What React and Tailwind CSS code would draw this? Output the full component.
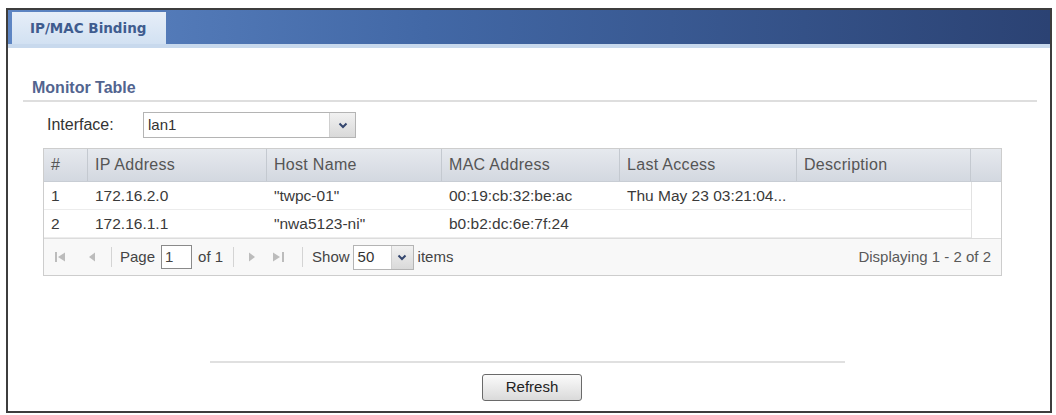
import React from 'react';

const COLS = 'grid-cols-[44px_179px_175px_178px_177px_174px_30px]';

const ROWS = [
  { n: '1', ip: '172.16.2.0', host: '"twpc-01"', mac: '00:19:cb:32:be:ac', last: 'Thu May 23 03:21:04...', desc: '' },
  { n: '2', ip: '172.16.1.1', host: '"nwa5123-ni"', mac: 'b0:b2:dc:6e:7f:24', last: '', desc: '' },
];

function Chevron() {
  return (
    <svg width="10" height="7" viewBox="0 0 10 7">
      <polyline points="1.5,1.5 5,5 8.5,1.5" fill="none" stroke="#34466e" strokeWidth="2" />
    </svg>
  );
}

function SelectBox({ value, width, height, arrowWidth }) {
  return (
    <div
      className="flex items-stretch border border-[#b4b4b4] bg-white"
      style={{ width, height }}
    >
      <span className="flex-1 flex items-center pl-[4px] text-[15px] text-[#333]">{value}</span>
      <span
        className="flex items-center justify-center border-l border-[#cfcfcf] bg-[linear-gradient(#f1f1f1,#d9d9d9)]"
        style={{ width: arrowWidth }}
      >
        <Chevron />
      </span>
    </div>
  );
}

// light grey disabled navigation glyphs, drawn edge to edge in their box
function PagerIcon({ kind }) {
  const c = '#bcbcbc';
  if (kind === 'first') {
    return (
      <svg width="10" height="12" viewBox="0 0 10 12">
        <rect x="0" y="1" width="2" height="10" fill={c} />
        <polygon points="10,1.5 3,6 10,10.5" fill={c} />
      </svg>
    );
  }
  if (kind === 'prev') {
    return (
      <svg width="8" height="12" viewBox="0 0 8 12">
        <polygon points="7,1.5 1,6 7,10.5" fill={c} />
      </svg>
    );
  }
  if (kind === 'next') {
    return (
      <svg width="8" height="12" viewBox="0 0 8 12">
        <polygon points="1,1.5 7,6 1,10.5" fill={c} />
      </svg>
    );
  }
  return (
    <svg width="12" height="12" viewBox="0 0 12 12">
      <polygon points="0,1.5 7,6 0,10.5" fill={c} />
      <rect x="9" y="1" width="2" height="10" fill={c} />
    </svg>
  );
}

function Sep() {
  return <span className="block w-px h-[20px] bg-[#d4d4d4]" />;
}

export default function App() {
  return (
    <div className="w-[1056px] h-[415px] bg-white overflow-hidden font-['Liberation_Sans',Arial,sans-serif]">
      <div className="ml-[6px] mt-[8px] w-[1046px] h-[405px] border-2 border-[#3d3d3d] bg-white">
        {/* Tab bar */}
        <div className="h-[34px] flex items-end pl-[4px] bg-[linear-gradient(to_right,#5d85c3,#4268a6_40%,#2b4273)]">
          <div className="w-[154px] h-[32px] flex items-center pl-[18px] bg-[linear-gradient(#e6eef8,#d2e1f2)] font-['DejaVu_Sans',Verdana,sans-serif] font-bold text-[13.5px] text-[#3f5c8f]">
            IP/MAC Binding
          </div>
        </div>
        <div className="h-[4px] bg-[#c8d9ed]" />

        {/* Section title */}
        <div className="pt-[31px] ml-[15px] w-[1014px]">
          <div className="pl-[9px] h-[18px] leading-[18px] text-[16px] font-bold text-[#52648f]">
            Monitor Table
          </div>
          <div className="mt-[3px] h-[2px] bg-[#dedede]" />
        </div>

        {/* Interface */}
        <div className="mt-[10px] flex items-center pl-[39px]">
          <span className="w-[96px] text-[16px] text-[#333]">Interface:</span>
          <SelectBox value="lan1" width={213} height={26} arrowWidth={26} />
        </div>

        {/* Table */}
        <div className="mt-[10px] ml-[35px] w-[959px] border border-[#cdcdcd] text-[15.5px] text-[#3a3a3a]">
          <div className={`grid ${COLS} h-[33px] bg-[linear-gradient(#e6e9ee,#d3d8e0)] border-b border-[#c8cdd4] text-[16px] tracking-[0.3px] text-[#555]`}>
            {['#', 'IP Address', 'Host Name', 'MAC Address', 'Last Access', 'Description', ''].map((h, i) => (
              <div
                key={i}
                className={`flex items-center pl-[7px] ${i < 6 ? 'border-r border-[#c4c9d0]' : ''}`}
              >
                {h}
              </div>
            ))}
          </div>
          {ROWS.map(r => (
            <div key={r.n} className={`grid ${COLS} h-[28px]`}>
              {[r.n, r.ip, r.host, r.mac, r.last, r.desc].map((v, i) => (
                <div key={i} className="flex items-center pl-[7px] whitespace-nowrap overflow-hidden border-b border-[#ececec]">
                  {v}
                </div>
              ))}
              <div className="border-l border-[#e2e2e2]" />
            </div>
          ))}
          {/* Pager */}
          <div className="h-[37px] flex items-center border-t border-[#dcdcdc] bg-[#f8f8f8] text-[15px] text-[#444]">
            <span className="ml-[11px]"><PagerIcon kind="first" /></span>
            <span className="ml-[23px]"><PagerIcon kind="prev" /></span>
            <span className="ml-[15px]"><Sep /></span>
            <span className="ml-[8px]">Page</span>
            <span className="ml-[6px] w-[31px] h-[24px] border border-[#8a8a8a] bg-white flex items-center pl-[3px]">1</span>
            <span className="ml-[6px]">of 1</span>
            <span className="ml-[10px]"><Sep /></span>
            <span className="ml-[14px]"><PagerIcon kind="next" /></span>
            <span className="ml-[17px]"><PagerIcon kind="last" /></span>
            <span className="ml-[17px]"><Sep /></span>
            <span className="ml-[9px]">Show</span>
            <span className="ml-[3px]">
              <SelectBox value="50" width={61} height={25} arrowWidth={22} />
            </span>
            <span className="ml-[4px]">items</span>
            <span className="ml-auto mr-[10px] text-[#595959]">Displaying 1 - 2 of 2</span>
          </div>
        </div>

        {/* Bottom separator and button */}
        <div className="mt-[85px] ml-[202px] w-[635px] h-[2px] bg-[#e0e0e0]" />
        <div className="mt-[11px] ml-[474px] w-[100px] h-[27px] flex items-center justify-center rounded-[3px] border border-[#6a6a6a] bg-[linear-gradient(#fbfbfb,#dadada)] text-[15px] text-[#222]">
          Refresh
        </div>
      </div>
    </div>
  );
}
